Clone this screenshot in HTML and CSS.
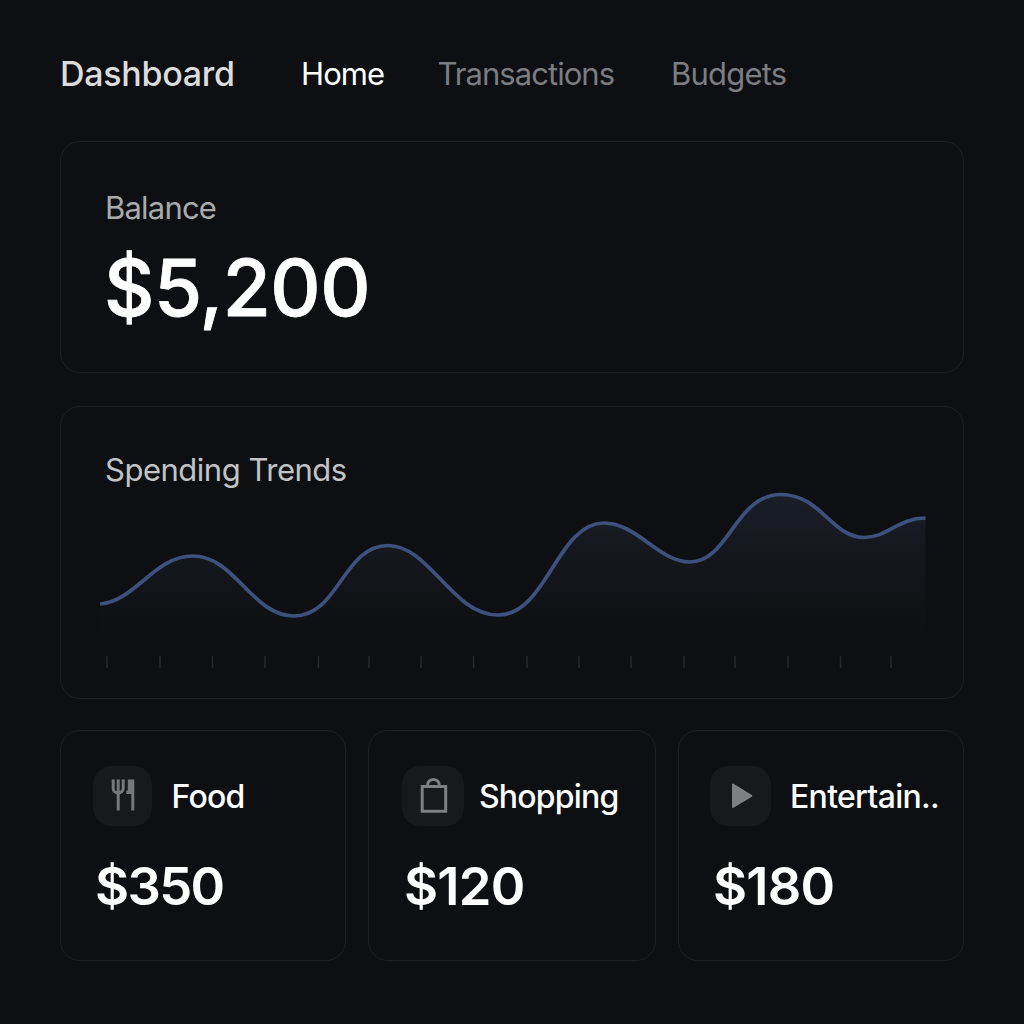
FILE: index.html
```html
<!DOCTYPE html>
<html lang="en">
<head>
<meta charset="utf-8">
<title>Dashboard</title>
<link rel="stylesheet" href="styles.css">
</head>
<body>
<header class="topbar">
  <h1 class="brand">Dashboard</h1>
  <nav class="nav">
    <a class="nav-link nav-home active">Home</a>
    <a class="nav-link nav-transactions">Transactions</a>
    <a class="nav-link nav-budgets">Budgets</a>
  </nav>
</header>
<main class="content">
  <section class="card balance">
    <h2 class="label">Balance</h2>
    <p class="balance-value">$5,200</p>
  </section>
  <section class="card trends">
    <h2 class="label trends-label">Spending Trends</h2>
    <svg class="chart" viewBox="100 488 826 184" width="826" height="184">
      <defs>
        <linearGradient id="area" gradientUnits="userSpaceOnUse" x1="0" y1="494" x2="0" y2="636">
          <stop offset="0" stop-color="#1a1e28"/>
          <stop offset="0.45" stop-color="#14171c"/>
          <stop offset="1" stop-color="#0d0f12"/>
        </linearGradient>
      </defs>
      <path fill="url(#area)" d="M100 604C136 601 154 556 193 556C235 556 252 616 294 616C339 616 343 545.500 388 545.500C430 545.500 452 615 498 615C547 615 557 523 604 523C637 523 659 562 690 562C729 562 735 494.500 781 494.500C821 494.500 832 537.500 864 537.500C888 537.500 898 518 925.500 518V636H100Z"/>
      <path class="line" d="M100 604C136 601 154 556 193 556C235 556 252 616 294 616C339 616 343 545.500 388 545.500C430 545.500 452 615 498 615C547 615 557 523 604 523C637 523 659 562 690 562C729 562 735 494.500 781 494.500C821 494.500 832 537.500 864 537.500C888 537.500 898 518 925.500 518"/>
      <path class="ticks" d="M107 656v12M160 656v12M212.500 656v12M265 656v12M318.500 656v12M369 656v12M421 656v12M473.500 656v12M527 656v12M579 656v12M631 656v12M684 656v12M735 656v12M788 656v12M840.500 656v12M891 656v12"/>
    </svg>
  </section>
  <div class="categories">
    <section class="card category food">
      <div class="category-head">
        <div class="tile">
          <svg viewBox="0 0 60 60" width="60" height="60"><path class="fork" d="M20.200 13.500V22.500a5 4.500 0 0 0 10 0V13.500M25.200 13.500V44.500"/><path class="solid" d="M34.800 13.500H41.300V44.500H38.300V28H33.300V24.500H34.800z"/></svg>
        </div>
        <h3 class="category-name">Food</h3>
      </div>
      <p class="amount">$350</p>
    </section>
    <section class="card category shopping">
      <div class="category-head">
        <div class="tile">
          <svg viewBox="0 0 62 60" width="62" height="60"><path class="bag" d="M20.200 20.500H43.700V45.300H20.200zM25.700 20.500V18.500a5.700 5 0 0 1 11.400 0V20.500"/></svg>
        </div>
        <h3 class="category-name">Shopping</h3>
      </div>
      <p class="amount">$120</p>
    </section>
    <section class="card category entertainment">
      <div class="category-head">
        <div class="tile">
          <svg viewBox="0 0 61 60" width="61" height="60"><path class="play" d="M23 18.500V41L41.300 29.800z"/></svg>
        </div>
        <h3 class="category-name">Entertain..</h3>
      </div>
      <p class="amount">$180</p>
    </section>
  </div>
</main>
</body>
</html>
```
FILE: styles.css
```css
* { box-sizing: border-box; }
body {
  margin: 0;
  min-height: 1024px;
  padding: 0 60px;
  background: #0d0f13;
  color: #fff;
  font-family: Inter, "Liberation Sans", sans-serif;
}
h1, h2, h3, p { margin: 0; }
.topbar { display: flex; height: 141px; padding-top: 54px; align-items: flex-start; }
.brand { width: 241px; font-size: 34px; line-height: 40px; font-weight: 500; letter-spacing: -0.3px; color: #dcdcdd; }
.nav { display: flex; font-size: 31px; line-height: 40px; }
.nav-link { color: #7c7d80; }
.nav-link.active { color: #fff; }
.nav-home { width: 136.5px; letter-spacing: -0.9px; }
.nav-transactions { width: 233.5px; letter-spacing: -0.95px; }
.nav-budgets { letter-spacing: -0.8px; }
.card { border: 1px solid #1e2024; border-radius: 20px; background: #0d0f12; }
.balance { height: 232px; padding: 46px 44px 0; }
.label { font-size: 31px; line-height: 40px; font-weight: 400; letter-spacing: -0.8px; color: #a9aaac; }
.balance-value { margin: 12px 0 0 -1px; font-size: 78px; line-height: 96px; font-weight: 500; letter-spacing: -0.5px; -webkit-text-stroke: 0.8px #fff; }
.trends { height: 293px; margin-top: 33px; padding: 43px 39px 0; }
.trends-label { padding-left: 5px; letter-spacing: -0.48px; color: #c2c3c4; }
.chart { display: block; margin-top: -2px; }
.line { fill: none; stroke: #3d517c; stroke-width: 3.7; }
.ticks { stroke: #26282b; stroke-width: 1.5; }
.categories { display: grid; grid-template-columns: 286px 288px 286px; column-gap: 22px; margin-top: 31px; }
.category { height: 231px; padding: 35px 0 0 32px; }
.category-head { display: flex; align-items: center; }
.tile { width: 59px; height: 60px; border-radius: 18px; background: #17191c; overflow: hidden; }
.tile svg { display: block; }
.category-name { margin-left: 19.5px; padding-top: 2px; font-size: 32px; line-height: 40px; font-weight: 500; letter-spacing: -0.8px; }
.amount { margin-top: 28px; padding-left: 2px; font-size: 52.5px; line-height: 64px; font-weight: 600; letter-spacing: -0.8px; }
.food .amount { letter-spacing: -1.7px; }
.shopping { padding-left: 33px; }
.shopping .tile { width: 62px; }
.shopping .category-name { margin-left: 15px; }
.entertainment { padding-left: 31px; }
.entertainment .tile { width: 61px; }
.entertainment .category-name { margin-left: 19px; letter-spacing: -0.7px; }
.entertainment .amount { padding-left: 3px; }
.fork { fill: none; stroke: #77787b; stroke-width: 3; }
.solid { fill: #77787b; }
.bag { fill: none; stroke: #7e7f82; stroke-width: 3; }
.play { fill: #7e7f82; stroke: #7e7f82; stroke-width: 2; stroke-linejoin: round; }
```
